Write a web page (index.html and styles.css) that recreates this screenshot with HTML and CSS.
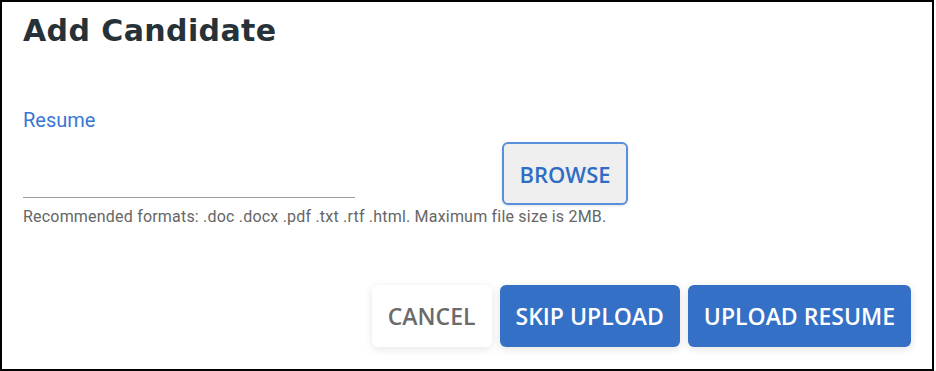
FILE: index.html
```html
<!DOCTYPE html>
<html lang="en">
<head>
<meta charset="utf-8">
<title>Add Candidate</title>
<link rel="stylesheet" href="styles.css">
</head>
<body>
<div class="frame">
  <h1 class="title">Add Candidate</h1>
  <div class="field">
    <div class="input-col">
      <label class="label">Resume</label>
      <div class="input-line"></div>
    </div>
    <button class="btn btn-browse">BROWSE</button>
  </div>
  <p class="help">Recommended formats: .doc .docx .pdf .txt .rtf .html. Maximum file size is 2MB.</p>
  <div class="actions">
    <button class="btn btn-cancel">CANCEL</button>
    <button class="btn btn-primary">SKIP UPLOAD</button>
    <button class="btn btn-primary">UPLOAD RESUME</button>
  </div>
</div>
</body>
</html>
```
FILE: styles.css
```css
html, body {
  margin: 0;
  padding: 0;
  background: #ffffff;
}
.frame {
  box-sizing: border-box;
  width: 934px;
  height: 371px;
  border: 2px solid #000000;
  padding: 9px 21px 0 21px;
  background: #ffffff;
}
.title {
  margin: 0;
  font-family: "DejaVu Sans", Inter, sans-serif;
  font-weight: 700;
  font-size: 30px;
  line-height: 40px;
  letter-spacing: 0.4px;
  color: #263238;
}
.field {
  display: flex;
  align-items: flex-start;
  margin-top: 57px;
}
.input-col {
  width: 332px;
}
.label {
  display: block;
  font-family: Roboto, sans-serif;
  font-size: 20px;
  line-height: 24px;
  color: #3a76d4;
}
.input-line {
  height: 65px;
  border-bottom: 1px solid #9e9e9e;
}
.btn {
  font-family: "Open Sans", sans-serif;
  font-weight: 600;
  font-size: 23px;
  border-radius: 6px;
  box-sizing: border-box;
  cursor: pointer;
}
.btn-browse {
  margin-left: 147px;
  margin-top: 34px;
  width: 126px;
  height: 63px;
  padding: 0;
  font-size: 22px;
  background: #efefef;
  border: 2px solid #5a8fdb;
  color: #2f6cc4;
  box-shadow: 0 1px 3px rgba(0,0,0,0.12);
}
.help {
  margin: 3px 0 0 0;
  font-family: Roboto, sans-serif;
  font-size: 16px;
  line-height: 18px;
  letter-spacing: 0.2px;
  color: #666666;
}
.actions {
  display: flex;
  justify-content: flex-end;
  gap: 8px;
  margin-top: 59px;
}
.actions .btn {
  height: 62px;
  padding: 0 16px;
  border: none;
}
.btn-cancel {
  background: #ffffff;
  color: #6b6b6b;
  box-shadow: 0 2px 8px rgba(0,0,0,0.10);
}
.btn-primary {
  background: #3570c7;
  color: #ffffff;
  box-shadow: 0 2px 8px rgba(0,0,0,0.12);
}
```
